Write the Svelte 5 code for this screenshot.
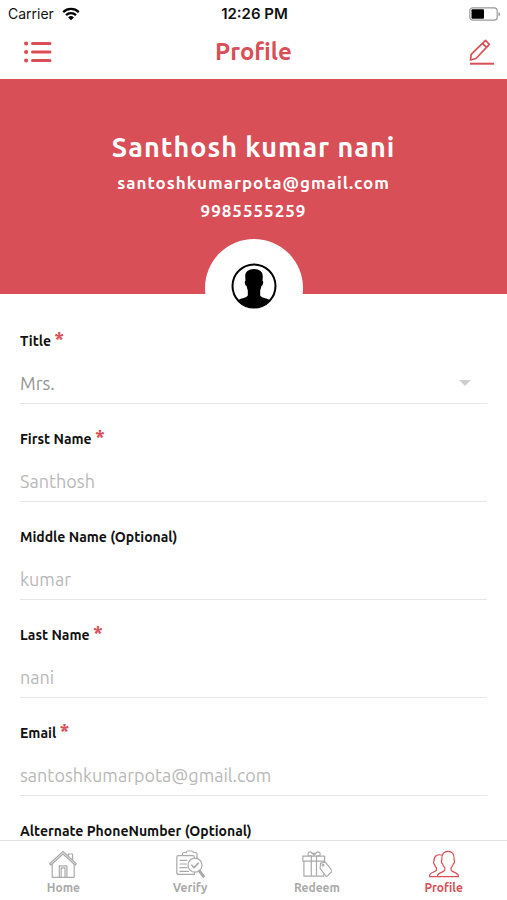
<script>
  let title = $state('Mrs.');
  let activeTab = $state('Profile');

  const titles = ['Mr.', 'Mrs.', 'Ms.', 'Dr.'];
  const tabs = ['Home', 'Verify', 'Redeem', 'Profile'];

  let fields = $state([
    { id: 'firstName', label: 'First Name', type: 'text', required: true, value: 'Santhosh' },
    { id: 'middleName', label: 'Middle Name (Optional)', type: 'text', required: false, value: 'kumar' },
    { id: 'lastName', label: 'Last Name', type: 'text', required: true, value: 'nani' },
    { id: 'email', label: 'Email', type: 'email', required: true, value: 'santoshkumarpota@gmail.com' },
    { id: 'altPhone', label: 'Alternate PhoneNumber (Optional)', type: 'tel', required: false, value: '' }
  ]);
</script>

<div class="app">
  <div class="status">
    <div class="carrier">
      <span>Carrier</span>
      <svg width="18" height="14" viewBox="0 0 18 14" fill="none" stroke="#000" stroke-width="2.3">
        <path d="M1.2 5.1a11.2 11.2 0 0 1 15.6 0" />
        <path d="M4 8.2a7.2 7.2 0 0 1 10 0" />
        <path d="M9 13.3 6.1 10.4a4.2 4.2 0 0 1 5.8 0z" fill="#000" stroke="none" />
      </svg>
    </div>
    <span class="time">12:26 PM</span>
    <svg class="battery" width="32" height="14" viewBox="0 0 32 14">
      <rect x="0.8" y="0.8" width="27.4" height="12.4" rx="3" fill="none" stroke="#999" stroke-width="1.2" />
      <rect x="2.5" y="2.3" width="12.5" height="9.4" rx="1" fill="#000" />
      <path d="M29.5 5v4.4q1.6-.6 1.6-2.2t-1.6-2.2z" fill="#999" />
    </svg>
  </div>

  <header>
    <button class="iconButton menu" aria-label="Menu">
      <svg width="28" height="22" viewBox="0 0 28 22" stroke="#d94f57" stroke-width="3" stroke-linecap="round">
        <path d="M8.5 2.5h17.500M8.5 11h17.500M8.5 19.500h17.500" />
        <path d="M2 2.500h.2M2 11h.2M2 19.500h.2" stroke-width="4" />
      </svg>
    </button>
    <h1>Profile</h1>
    <button class="iconButton edit" aria-label="Edit profile">
      <svg width="26" height="26" viewBox="0 0 26 26" fill="none" stroke="#d94f57" stroke-width="1.7" stroke-linejoin="round">
        <path d="M16.500 1.300 20.300 5.300 7 19.500 1.500 21 2.200 15.300z" />
        <path d="m13.500 4.300 4 4" />
        <path d="M1 24.700h24" stroke-width="2" />
      </svg>
    </button>
  </header>

  <main>
    <section class="hero">
      <h2>Santhosh kumar nani</h2>
      <p>santoshkumarpota@gmail.com</p>
      <p>9985555259</p>
      <div class="avatar">
        <svg width="46" height="46" viewBox="0 0 46 46">
          <circle cx="23" cy="23" r="21.5" fill="#fff" stroke="#000" stroke-width="2" />
          <path
            d="M23 6c-5.600 0-8.800 2.800-8.800 7.400l.3 4.300c-.9.100-.9 1.400-.5 2.900.3 1.400.8 2.300 1.600 2.400.3 1.800.8 3.300 1.200 4.500v5.100c-.6 1.700-3.900 2.300-7.400 3.500-1.600.5-2.100 1.100-2.700 1.800A21.500 21.500 0 0 0 23 44.500a21.500 21.500 0 0 0 16.300-6.600c-.6-.7-1.100-1.300-2.700-1.800-3.500-1.200-6.800-1.800-7.400-3.500v-5.100c.4-1.200.9-2.700 1.200-4.500.8-.1 1.300-1 1.600-2.400.4-1.500.4-2.800-.5-2.900l.3-4.300C31.800 8.800 28.600 6 23 6z"
          />
        </svg>
      </div>
    </section>

    <form>
      <div class="field">
        <label for="title">Title <span class="star">*</span></label>
        <div class="selectBox">
          <select id="title" bind:value={title}>
            {#each titles as option}
              <option value={option}>{option}</option>
            {/each}
          </select>
          <svg class="caret" width="12" height="6" viewBox="0 0 12 6"><path d="M0 0h12L6 6z" fill="#cfcfcf" /></svg>
        </div>
      </div>

      {#each fields as field}
        <div class="field">
          <label for={field.id}>
            {field.label}
            {#if field.required}<span class="star">*</span>{/if}
          </label>
          <input id={field.id} type={field.type} bind:value={field.value} />
        </div>
      {/each}
    </form>
  </main>

  <nav>
    {#each tabs as tab}
      <button class="tab" class:active={activeTab === tab} onclick={() => (activeTab = tab)}>
        <svg width="30" height="28" viewBox="0 0 30 28" fill="none" stroke="currentColor" stroke-width="1.2" stroke-linejoin="round" stroke-linecap="round">
          {#if tab === 'Home'}
            <path d="M1.700 13.800 15 1.500l13.300 12.300-1.200 1.200L15 4 2.900 15z" />
            <path d="M4.200 14v13.300h22V14M11.300 27.300V15.800h7.600v11.500M13.200 27.300v-9.500h3.800v9.500M20.200 6.300V4h4.400v6.300" />
          {:else if tab === 'Verify'}
            <path d="M19.500 22.800v1.600H3.500q-1.700 0-1.700-1.700V7.300q0-1.700 1.700-1.700h14.200q1.700 0 1.700 1.600" />
            <path d="M7.500 5.300V4q0-1.500 1.500-1.500h2.200q.4-1.500 1.600-1.500h4q1.200 0 1.600 1.500h2.100q1.500 0 1.500 1.500v4.300" />
            <path d="M5 10.300h7M5 14h6.500M5 17.700h7M5 21.300h8.500" />
            <circle cx="20" cy="15.200" r="7" />
            <path d="m16.800 15.200 2.300 2.400 4.200-4.500" stroke-width="1.600" />
            <path d="m24.500 21.200 3.800 5" stroke-width="3" />
          {:else if tab === 'Redeem'}
            <path d="M.8 6.200h21.800v5H.8zM1.900 11.200v15h19.900v-2.500M21.800 11.200v2M9.300 6.200v20M14.500 6.200v20M5.500 11.200h16" />
            <path d="M9.300 6q-4.500 0-3-3.200 2.300-2.400 4.600 1L12 5.600l1.200-1.800q2.300-3.400 4.700-1 1.400 3.200-3.200 3.200M9.800 3.300h4.400" />
            <path d="m18.600 13.200 4.800-1 6.400 8.200q.5.700-.2 1.300l-4.500 4.400q-.7.600-1.300-.1l-5.700-7.600z" fill="#fff" />
            <circle cx="21" cy="15.200" r=".8" />
          {:else}
            <path d="M12.500 5C8.500 4 4.700 6 5 11.300c-.7.300-.5 2.700.6 3.200.4 1.700 1 2.500 1.800 3.200v2.600c-.6 1.600-6.800 2.300-6.800 5.200v1.200h6.900" />
            <path d="M19 1.300c-4 0-6.200 2.700-6.100 7.200v1.600c-1 .1-.5 3.400.7 3.700.3 1.600 1.200 2.900 2.200 3.900v2.600c-.6 1.600-7.200 2.600-7.200 5.400v1h20.800v-1c0-2.800-6.700-3.800-7.300-5.400v-2.600c1-1 1.900-2.300 2.200-3.900 1.300-.3 1.700-3.600.8-3.700V8.500c.1-4.500-2.100-7.200-6.100-7.200z" />
          {/if}
        </svg>
        <span>{tab}</span>
      </button>
    {/each}
  </nav>
</div>

<style>
  :global(body) {
    margin: 0;
    background: #fff;
  }

  .app {
    display: flex;
    flex-direction: column;
    height: 100vh;
    overflow: hidden;
    font-family: Ubuntu, "Noto Sans", sans-serif;
  }

  .app * {
    box-sizing: border-box;
  }

  button,
  input,
  select {
    font-family: inherit;
    border: none;
    background: none;
    padding: 0;
    margin: 0;
    outline: none;
  }

  button {
    cursor: pointer;
  }

  svg {
    display: block;
  }

  .status {
    display: grid;
    grid-template-columns: 1fr auto 1fr;
    align-items: center;
    height: 27px;
    padding: 0 6px 0 8px;
    font-family: Inter, sans-serif;
    font-size: 14px;
    color: #111;
  }

  .carrier {
    display: flex;
    align-items: center;
    gap: 8px;
  }

  .time {
    font-size: 15px;
    font-weight: 600;
  }

  .battery {
    justify-self: end;
  }

  header {
    display: grid;
    grid-template-columns: 1fr auto 1fr;
    align-items: center;
    height: 52px;
    padding: 0 12px 2px;
  }

  .menu {
    justify-self: start;
    padding-left: 12px;
  }

  .edit {
    justify-self: end;
  }

  h1 {
    margin: 0;
    font-size: 24px;
    line-height: 32px;
    font-weight: 600;
    color: #d94f57;
  }

  main {
    flex: 1;
    min-height: 0;
    overflow-y: auto;
    scrollbar-width: none;
  }

  .hero {
    display: flex;
    flex-direction: column;
    align-items: center;
    height: 215px;
    padding-top: 50px;
    background: #d94f57;
    color: #fff;
  }

  h2 {
    margin: 0 0 4px;
    font-size: 27px;
    line-height: 36px;
    font-weight: 600;
    letter-spacing: 1px;
  }

  .hero p {
    margin: 0;
    font-size: 17px;
    line-height: 28px;
    font-weight: 600;
    letter-spacing: 1px;
  }

  .avatar {
    display: flex;
    align-items: center;
    justify-content: center;
    flex-shrink: 0;
    width: 98px;
    height: 98px;
    margin-top: 14px;
    padding-bottom: 4px;
    border-radius: 50%;
    background: #fff;
  }

  form {
    padding: 34px 20px 20px;
  }

  .field {
    height: 98px;
  }

  label {
    display: block;
    height: 28px;
    font-size: 14px;
    line-height: 26px;
    font-weight: 600;
    color: #111;
  }

  .star {
    font-size: 20px;
    line-height: 20px;
    color: #d94f57;
  }

  input,
  select {
    display: block;
    width: 100%;
    height: 48px;
    border-bottom: 1px solid #e6e6e6;
    border-radius: 0;
    font-size: 18px;
    color: #b8b8b8;
    padding-top: 6px;
  }

  .selectBox {
    display: grid;
    align-items: center;
  }

  select {
    grid-area: 1 / 1;
    appearance: none;
    color: #949494;
  }

  .caret {
    grid-area: 1 / 1;
    justify-self: end;
    margin-right: 16px;
    margin-top: 6px;
    pointer-events: none;
  }

  nav {
    display: grid;
    grid-template-columns: repeat(4, 1fr);
    height: 60px;
    border-top: 1px solid #e2e2e2;
    background: #fff;
  }

  .tab {
    display: flex;
    flex-direction: column;
    align-items: center;
    padding-top: 9px;
    font-size: 12px;
    line-height: 20px;
    font-weight: 600;
    color: #aaa;
  }

  .tab.active {
    color: #d94f57;
  }
</style>
